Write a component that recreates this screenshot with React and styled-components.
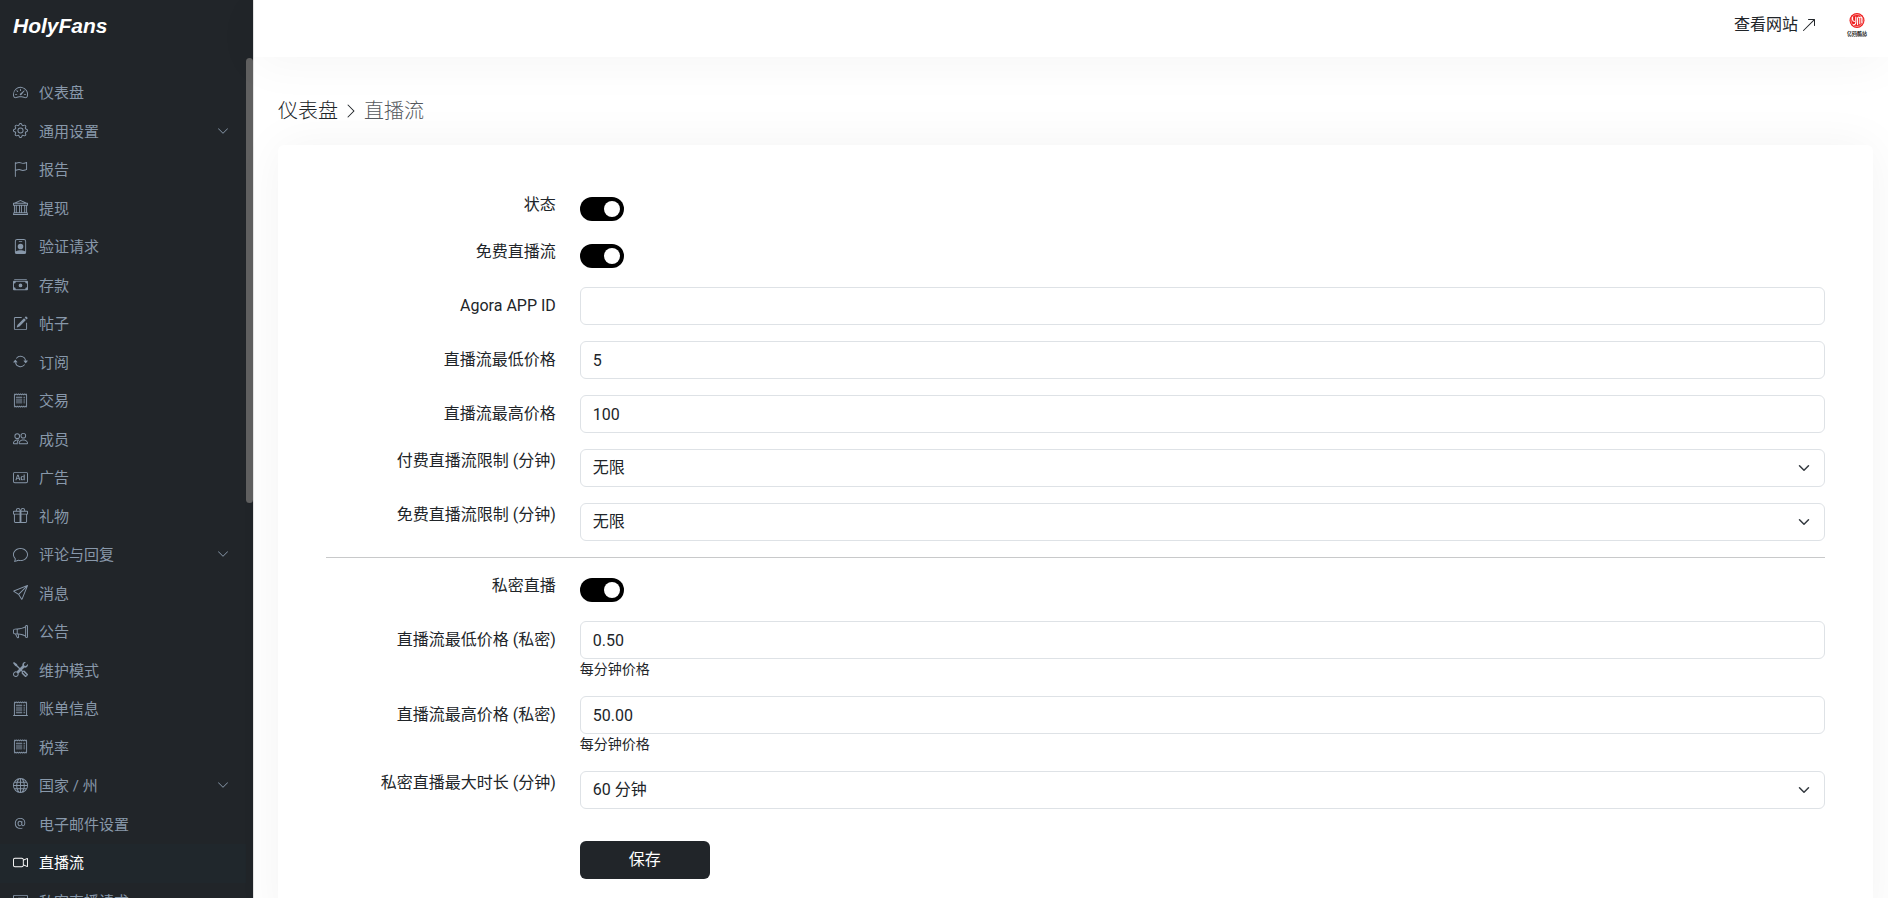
import React from "react";
import styled, { createGlobalStyle } from "styled-components";
import {
  BsSpeedometer2,
  BsGear,
  BsFlag,
  BsBank,
  BsPersonBadge,
  BsCashStack,
  BsPencilSquare,
  BsArrowRepeat,
  BsReceipt,
  BsPeople,
  BsBadgeAd,
  BsGift,
  BsChat,
  BsSend,
  BsMegaphone,
  BsTools,
  BsReceiptCutoff,
  BsGlobe,
  BsAt,
  BsCameraVideo,
  BsCardList,
  BsChevronDown,
  BsChevronRight,
  BsArrowUpRight,
} from "react-icons/bs";

const menu = [
  { text: "仪表盘", icon: BsSpeedometer2 },
  { text: "通用设置", icon: BsGear, more: true },
  { text: "报告", icon: BsFlag },
  { text: "提现", icon: BsBank },
  { text: "验证请求", icon: BsPersonBadge },
  { text: "存款", icon: BsCashStack },
  { text: "帖子", icon: BsPencilSquare },
  { text: "订阅", icon: BsArrowRepeat },
  { text: "交易", icon: BsReceipt },
  { text: "成员", icon: BsPeople },
  { text: "广告", icon: BsBadgeAd },
  { text: "礼物", icon: BsGift },
  { text: "评论与回复", icon: BsChat, more: true },
  { text: "消息", icon: BsSend },
  { text: "公告", icon: BsMegaphone },
  { text: "维护模式", icon: BsTools },
  { text: "账单信息", icon: BsReceiptCutoff },
  { text: "税率", icon: BsReceipt },
  { text: "国家 / 州", icon: BsGlobe, more: true },
  { text: "电子邮件设置", icon: BsAt },
  { text: "直播流", icon: BsCameraVideo, active: true },
  { text: "私密直播请求", icon: BsCardList },
];

const SwitchRow = ({ id, label }) => (
  <Row>
    <Label htmlFor={id} $top>
      {label}
    </Label>
    <Field $switch>
      <Switch type="checkbox" role="switch" id={id} defaultChecked />
    </Field>
  </Row>
);

const InputRow = ({ id, label, value, hint }) => (
  <Row>
    <Label htmlFor={id}>{label}</Label>
    <Field>
      <Input type="text" id={id} defaultValue={value} />
      {hint && <Hint>{hint}</Hint>}
    </Field>
  </Row>
);

const SelectRow = ({ id, label, options }) => (
  <Row>
    <Label htmlFor={id} $top>
      {label}
    </Label>
    <Field>
      <SelectWrap>
        <Select id={id}>
          {options.map((option) => (
            <option key={option}>{option}</option>
          ))}
        </Select>
        <SelectArrow viewBox="0 0 16 16" aria-hidden="true">
          <path
            fill="none"
            stroke="#343a40"
            strokeLinecap="round"
            strokeLinejoin="round"
            strokeWidth="2"
            d="m2 5 6 6 6-6"
          />
        </SelectArrow>
      </SelectWrap>
    </Field>
  </Row>
);

const AvatarLogo = () => (
  <Avatar viewBox="0 0 32 32" role="img" aria-label="avatar">
    <circle cx="16" cy="11.5" r="7.5" fill="#ee1c1c" />
    <circle cx="16" cy="11.5" r="6" fill="none" stroke="#fff" strokeWidth=".5" />
    <g fill="none" stroke="#fff" strokeWidth="1.1" strokeLinecap="round">
      <path d="M11.6 8.4v2.4q0 1.6 1.7 1.6M14.8 8v5.4q0 2-2.4 2.4" />
      <path d="M16.6 15.6V9.2q0-1.2 1.1-1.2t1.1 1.2v5.6M18.8 9.2q0-1.2 1-1.2t1 1.2v4.6" />
    </g>
    <AvatarCaption x="16" y="26" textAnchor="middle">
      亿码酷站
    </AvatarCaption>
    <path d="M7 27.5h18" stroke="#888" strokeWidth="1" strokeDasharray="1.4 .5" />
  </Avatar>
);

export default function App() {
  return (
    <>
      <GlobalStyle />
      <Page>
        <Sidebar>
          <Brand href="#">HolyFans</Brand>
          <MenuArea>
            <Menu>
              {menu.map(({ text, icon: Icon, more, active }) => (
                <li key={text}>
                  <MenuLink href="#" $active={active}>
                    <Icon size={15} />
                    <span>{text}</span>
                    {more && <MoreIcon size={12} />}
                  </MenuLink>
                </li>
              ))}
            </Menu>
            <ScrollTrack>
              <ScrollThumb />
            </ScrollTrack>
          </MenuArea>
        </Sidebar>
        <Content>
          <Header>
            <SiteLink href="#">
              查看网站 <BsArrowUpRight size={16} />
            </SiteLink>
            <AvatarLogo />
          </Header>
          <Main>
            <Breadcrumb>
              <a href="#">仪表盘</a>
              <BsChevronRight size={16} />
              <Muted>直播流</Muted>
            </Breadcrumb>
            <Card>
              <SwitchRow id="status" label="状态" />
              <SwitchRow id="free" label="免费直播流" />
              <InputRow id="agora" label="Agora APP ID" value="" />
              <InputRow id="min" label="直播流最低价格" value="5" />
              <InputRow id="max" label="直播流最高价格" value="100" />
              <SelectRow id="paidLimit" label="付费直播流限制 (分钟)" options={["无限"]} />
              <SelectRow id="freeLimit" label="免费直播流限制 (分钟)" options={["无限"]} />
              <Divider />
              <SwitchRow id="private" label="私密直播" />
              <InputRow id="privateMin" label="直播流最低价格 (私密)" value="0.50" hint="每分钟价格" />
              <InputRow id="privateMax" label="直播流最高价格 (私密)" value="50.00" hint="每分钟价格" />
              <SelectRow id="duration" label="私密直播最大时长 (分钟)" options={["60 分钟"]} />
              <Actions>
                <SaveButton type="submit">保存</SaveButton>
              </Actions>
            </Card>
          </Main>
        </Content>
      </Page>
    </>
  );
}

const GlobalStyle = createGlobalStyle`
  * {
    box-sizing: border-box;
  }
  body {
    margin: 0;
    color: #212529;
    background: #ffffff;
    font-family: Roboto, "Noto Sans CJK SC", sans-serif;
    font-size: 16px;
    font-weight: 400;
    line-height: 1.5;
  }
  a {
    color: inherit;
    text-decoration: none;
  }
  input, select, button {
    font: inherit;
    color: inherit;
  }
`;
const Page = styled.div`
  display: flex;
  height: 100vh;
  overflow: hidden;
`;
const Sidebar = styled.aside`
  width: 253px;
  flex-shrink: 0;
  display: flex;
  flex-direction: column;
  background: #212529;
`;
const Brand = styled.a`
  height: 58px;
  flex-shrink: 0;
  padding: 10px 13px;
  color: #ffffff;
  font-family: "Liberation Sans", sans-serif;
  font-size: 21px;
  font-weight: 700;
  font-style: italic;
`;
const MenuArea = styled.nav`
  flex: 1;
  min-height: 0;
  display: flex;
`;
const Menu = styled.ul`
  flex: 1;
  margin: 0;
  padding: 16px 0 0;
  list-style: none;
  overflow: hidden;
`;
const MenuLink = styled.a`
  display: flex;
  align-items: center;
  gap: 11px;
  padding: 8px 17px 8px 13px;
  color: ${({ $active }) => ($active ? "#ffffff" : "#8898aa")};
  background: ${({ $active }) => ($active ? "#20272c" : "transparent")};
  font-size: 15px;

  svg {
    margin-bottom: 2px;
  }
`;
const MoreIcon = styled(BsChevronDown)`
  margin-left: auto;
`;
const ScrollTrack = styled.div`
  width: 7px;
`;
const ScrollThumb = styled.div`
  height: 53%;
  border-radius: 4px;
  background: #606060;
`;
const Content = styled.div`
  flex: 1;
  min-width: 0;
  border-left: 1px solid #e4e4e4;
`;
const Header = styled.header`
  height: 57px;
  display: flex;
  align-items: center;
  justify-content: flex-end;
  gap: 24px;
  padding: 0 15px 7px 24px;
  box-shadow: 0 8px 48px rgba(0, 0, 0, 0.04);
`;
const SiteLink = styled.a`
  display: flex;
  align-items: center;
  gap: 3px;
`;
const Avatar = styled.svg`
  width: 32px;
  height: 32px;
`;
const AvatarCaption = styled.text`
  fill: #222222;
  font-size: 5px;
  font-weight: 700;
`;
const Main = styled.main`
  padding: 38px 15px 48px 24px;
`;
const Breadcrumb = styled.div`
  display: flex;
  align-items: center;
  gap: 5px;
  margin-bottom: 18px;
  font-size: 20px;
  font-weight: 300;
  line-height: 32px;
`;
const Muted = styled.span`
  color: #55595d;
`;
const Card = styled.form`
  padding: 48px;
  border-radius: 6px;
  background: #ffffff;
  box-shadow: 0 0 48px rgba(0, 0, 0, 0.05);
`;
const Row = styled.div`
  display: grid;
  grid-template-columns: repeat(12, 1fr);
  column-gap: 24px;
  margin-bottom: 16px;
`;
const Label = styled.label`
  grid-column: span 2;
  padding-top: ${({ $top }) => ($top ? "0" : "7px")};
  text-align: right;
  white-space: nowrap;
`;
const Field = styled.div`
  grid-column: span 10;
  padding: ${({ $switch }) => ($switch ? "4px 0 3px" : "0")};
`;
const Switch = styled.input`
  appearance: none;
  display: flex;
  align-items: center;
  justify-content: flex-end;
  width: 44px;
  height: 24px;
  margin: 0;
  padding: 4px;
  border-radius: 12px;
  background: #000000;

  &::before {
    content: "";
    width: 16px;
    height: 16px;
    border-radius: 50%;
    background: #ffffff;
  }
  &:not(:checked) {
    justify-content: flex-start;
    background: #adb5bd;
  }
`;
const Input = styled.input`
  display: block;
  width: 100%;
  height: 38px;
  padding: 6px 12px;
  border: 1px solid #dee2e6;
  border-radius: 6px;
  background: #ffffff;
`;
const Hint = styled.small`
  display: block;
  font-size: 14px;
`;
const SelectWrap = styled.div`
  position: relative;
`;
const Select = styled.select`
  appearance: none;
  display: block;
  width: 100%;
  height: 38px;
  padding: 6px 36px 6px 12px;
  border: 1px solid #dee2e6;
  border-radius: 6px;
  background: #ffffff;
`;
const SelectArrow = styled.svg`
  position: absolute;
  top: 13px;
  right: 15px;
  width: 12px;
  height: 12px;
  pointer-events: none;
`;
const Divider = styled.hr`
  margin: 16px 0;
  border: 0;
  border-top: 1px solid #c8c9ca;
`;
const Actions = styled.div`
  display: grid;
  grid-template-columns: repeat(12, 1fr);
  column-gap: 24px;
  margin-top: 32px;
`;
const SaveButton = styled.button`
  grid-column: 3 / span 10;
  justify-self: start;
  width: 130px;
  height: 38px;
  border: 0;
  border-radius: 6px;
  color: #ffffff;
  background: #212529;
  cursor: pointer;
`;
